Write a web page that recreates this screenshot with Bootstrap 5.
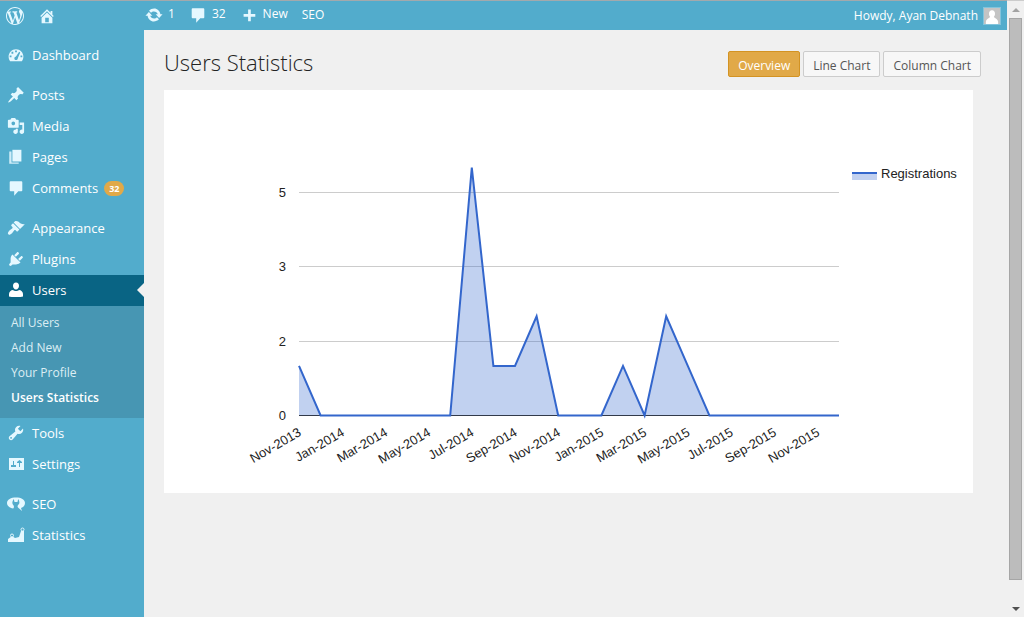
<!DOCTYPE html>
<html lang="en">
<head>
<meta charset="utf-8">
<meta name="viewport" content="width=device-width, initial-scale=1">
<title>Users Statistics</title>
<link href="https://cdn.jsdelivr.net/npm/bootstrap@5.3.0/dist/css/bootstrap.min.css" rel="stylesheet">
<style>
  body { font-family: "Open Sans", sans-serif; font-size: 13px; line-height: 18px; background: #f0f0f0; color: #444; }
  a { text-decoration: none; }
  .app-pane { min-width: 0; }
  .admin-bar { background: #52accc; border-top: 1px solid #a3a9ac; height: 30px; font-size: 12px; font-weight: 500; }
  .admin-bar a { color: #fff; }
  .ico { width: 18px; height: 18px; fill: #e5f8ff; flex: none; }
  .bar-brand { width: 145px; padding-left: 6px; gap: 14px; }
  .bar-links { gap: 14px; padding-bottom: 2px; }
  .bar-links a { gap: 5px; }
  .bar-links .ico { margin-top: 1px; }
  .bar-user { padding-right: 7px; gap: 6px; }
  .avatar { width: 16px; height: 16px; outline: 1px solid #82c4dc; }
  .side-menu { width: 144px; background: #52accc; padding-top: 10px; flex: none; }
  .side-menu a { color: #fff; }
  .menu-row { height: 31px; padding: 0 0 1px 7px; gap: 7px; position: relative; }
  .menu-gap { margin-top: 9px; }
  .menu-row.current { background: #096484; }
  .menu-row.current .ico { fill: #fff; }
  .menu-row.current::after { content: ""; position: absolute; right: 0; top: 8px; border: 7px solid transparent; border-right-color: #f0f0f0; border-left-width: 0; }
  .count { background: #e1a948; font-size: 9px; line-height: 15px; padding: 0 5px; font-weight: 700; margin-left: -1px; }
  .sub-menu { background: #4796b3; padding: 4px 11px 8px; }
  .sub-menu a { display: block; font-size: 12px; line-height: 25px; color: #dceef4; }
  .sub-menu a.current { color: #fff; font-weight: 600; }
  .page-main { padding: 21px 26px 20px 20px; }
  .page-title { font-size: 22px; line-height: 22px; font-weight: 300; color: #222; }
  .view-switch { gap: 3px; }
  .view-btn { font-size: 12px; line-height: 18px; padding: 5px 9px 1px; border: 1px solid #ccc; border-radius: 2px; background: #f7f7f7; color: #555; }
  .view-btn.active { background: #e1a948; border-color: #d39323; color: #fff; }
  .chart-card { background: #fff; margin: 13px 8px 0 0; }
  .chart-card text { font: 13px "Liberation Sans", sans-serif; fill: #222; }
  .scroll-rail { width: 17px; background: #f0f0f0; border-top: 1px solid #ccc; flex: none; height: 100vh; padding: 6px 2px 5px; position: sticky; top: 0; }
  .scroll-thumb { background: #bcbcbc; border: 1px solid #a6a6a6; width: 13px; margin: 6px 0 27px; }
</style>
</head>
<body>
<svg class="d-none" xmlns="http://www.w3.org/2000/svg">
  <symbol id="i-wp" viewBox="0 0 20 20"><path d="M20 10c0-5.51-4.49-10-10-10C4.48 0 0 4.49 0 10c0 5.52 4.48 10 10 10 5.51 0 10-4.48 10-10zM7.78 15.37L4.37 6.22c.55-.02 1.17-.08 1.17-.08.5-.06.44-1.13-.06-1.11 0 0-1.45.11-2.37.11-.18 0-.37 0-.58-.01C4.12 2.69 6.87 1.11 10 1.11c2.33 0 4.45.87 6.05 2.34-.68-.11-1.65.39-1.65 1.58 0 .74.45 1.36.9 2.1.35.61.55 1.36.55 2.46 0 1.49-1.4 5-1.4 5l-3.03-8.37c.54-.02.82-.17.82-.17.5-.05.44-1.25-.06-1.22 0 0-1.44.12-2.38.12-.87 0-2.33-.12-2.33-.12-.5-.03-.56 1.2-.06 1.22l.92.08 1.26 3.41zM17.41 10c.24-.64.74-1.87.43-4.25.7 1.29 1.05 2.71 1.05 4.25 0 3.29-1.73 6.24-4.4 7.78.97-2.59 1.94-5.2 2.92-7.78zM6.1 18.09C3.12 16.65 1.11 13.53 1.11 10c0-1.3.23-2.48.72-3.59C3.25 10.3 4.67 14.2 6.1 18.09zm4.03-6.63l2.58 6.98c-.86.29-1.76.45-2.71.45-.79 0-1.57-.11-2.29-.33.81-2.38 1.62-4.74 2.42-7.1z"/></symbol>
  <symbol id="i-home" viewBox="0 0 20 20"><path d="M16 8.5l1.53 1.53-1.06 1.06L10 4.6l-6.47 6.49-1.06-1.06L10 2.5l4 4v-2h2v4zm-6-2.46l6 5.99V18H4v-5.97zM12 17v-5H8v5h4z"/></symbol>
  <symbol id="i-update" viewBox="0 0 20 20"><path d="M10.2 2.9c3.53 0 6.43 2.8 6.92 6.38h2.38l-3.8 4-3.8-4h2.32c-.45-1.8-2.21-3.1-4.32-3.1-1.2 0-2.4.5-3.2 1.4L4.5 5.2C5.9 3.7 8.11 2.9 10.2 2.9zm-.4 14.200c-3.52 0-6.43-2.800-6.92-6.380H.5l3.800-4 3.800 4H5.780c.45 1.800 2.210 3.100 4.320 3.100 1.200 0 2.400-.5 3.200-1.400l2.200 2.380c-1.400 1.500-3.610 2.300-5.700 2.300z"/></symbol>
  <symbol id="i-comment" viewBox="0 0 20 20"><path d="M4 2.500h12q1 0 1 1v9q0 1-1 1h-3.500L8 18.500v-5H4q-1 0-1-1v-9q0-1 1-1z"/></symbol>
  <symbol id="i-plus" viewBox="0 0 20 20"><path d="M17 9v3h-5v5H9v-5H4V9h5V4h3v5z"/></symbol>
  <symbol id="i-dash" viewBox="0 0 20 20"><path fill-rule="evenodd" d="M3.500 17h13c1-1.400 1.700-3.100 1.700-5 0-4.400-3.600-8.300-8.200-8.300S1.800 7.600 1.800 12c0 1.900.7 3.600 1.700 5zM9 5h2v2H9zM5 6.500h2v2H5zM3 10.500h2v2H3zM15 10.500h2v2h-2zM13.500 6.500l1.200.8-2.700 6.200c.2 1.400-.8 2-2 2s-2-1-1.800-2c.1-1 1-1.400 1.600-1.500z"/></symbol>
  <symbol id="i-pin" viewBox="0 0 20 20"><path d="M10.440 3.020l1.820-1.820 6.360 6.350-1.830 1.820c-1.050-.68-2.480-.57-3.410.36l-.75.75c-.92.93-1.040 2.350-.35 3.410l-1.830 1.820-2.410-2.410-2.800 2.790c-.42.42-3.380 2.710-3.800 2.290s1.860-3.390 2.280-3.810l2.790-2.790L4.100 9.360l1.830-1.820c1.050.69 2.480.57 3.400-.36l.75-.75c.93-.92 1.050-2.350.36-3.410z"/></symbol>
  <symbol id="i-media" viewBox="0 0 20 20"><path d="M13 11V4c0-.55-.45-1-1-1h-1.670L9 1H5L3.670 3H2c-.55 0-1 .45-1 1v7c0 .55.45 1 1 1h10c.55 0 1-.45 1-1zM7 5.100c1.100 0 2 .9 2 2s-.9 2-2 2-2-.9-2-2 .9-2 2-2zM14 6h5v10.500c0 1.380-1.120 2.500-2.500 2.500S14 17.880 14 16.500s1.120-2.500 2.500-2.500c.17 0 .34.02.5.05V9h-3V6zm-4 8.050V13h2v3.500c0 1.380-1.120 2.500-2.500 2.500S7 17.880 7 16.500 8.120 14 9.500 14c.17 0 .34.02.5.05z"/></symbol>
  <symbol id="i-page" viewBox="0 0 20 20"><path d="M6 15V2h10v13H6z"/><path d="M5 16h8v1.500H2.500V4H5z" opacity=".85"/></symbol>
  <symbol id="i-brush" viewBox="0 0 20 20"><path d="M14.480 11.060L7.410 3.990l1.500-1.500c.5-.56 2.300-.47 3.510.32 1.210.8 1.430 1.280 2.910 2.100 1.180.64 2.450 1.260 4.450.85zm-.71.71L6.700 4.700 4.930 6.470c-.39.39-.39 1.020 0 1.410l1.060 1.060c.39.39.39 1.030 0 1.420-.6.6-1.430 1.110-2.210 1.690-.35.26-.7.53-1.010.84C1.430 14.230.4 16.080 1.400 17.070c.99 1 2.840-.03 4.180-1.360.31-.31.58-.66.85-1.020.57-.78 1.080-1.610 1.690-2.210.39-.39 1.020-.39 1.410 0l1.060 1.060c.39.39 1.020.39 1.410 0z"/></symbol>
  <symbol id="i-plug" viewBox="0 0 20 20"><path d="M13.110 4.360L9.870 7.600 8 5.730l3.240-3.240c.35-.34 1.050-.2 1.560.32.52.51.66 1.210.31 1.550zm-8 1.770l.91-1.120 9.010 9.010-1.190.84c-.71.71-2.630 1.160-3.820 1.160H6.140L4.900 17.260c-.59.59-1.540.59-2.120 0-.59-.58-.59-1.530 0-2.120l1.240-1.240v-3.880c0-1.130.4-3.190 1.090-3.890zm7.260 3.970l3.240-3.240c.34-.35 1.040-.21 1.550.31.52.51.66 1.210.31 1.550l-3.240 3.250z"/></symbol>
  <symbol id="i-user" viewBox="0 0 18 18"><path d="M9 1.500c2 0 3 1.400 3 3.300 0 2-1.200 3.700-3 3.700S6 6.800 6 4.800c0-1.900 1-3.300 3-3.300zM2 15.500V13c0-2 2-4 4-4 .8.800 1.800 1.100 3 1.100s2.200-.3 3-1.100c2 0 4 2 4 4v2.500c-2 .7-12 .7-14 0z"/></symbol>
  <symbol id="i-tool" viewBox="0 0 20 20"><path d="M16.680 9.770c-1.340 1.340-3.300 1.670-4.950.99l-5.410 6.520c-.99.99-2.590.99-3.580 0s-.99-2.590 0-3.570l6.520-5.420c-.68-1.650-.35-3.610.99-4.950 1.280-1.280 3.120-1.620 4.720-1.060l-2.890 2.890 2.820 2.820 2.860-2.870c.53 1.580.18 3.390-1.080 4.650zM3.810 16.210c.4.39 1.040.39 1.430 0 .4-.4.4-1.040 0-1.430-.39-.4-1.030-.4-1.430 0-.39.39-.39 1.030 0 1.430z"/></symbol>
  <symbol id="i-set" viewBox="0 0 18 18"><path fill-rule="evenodd" d="M2 3h15v12H2zM6 6h1v4h2v2H4v-2h2zM12 12V8h-2V7l2.500-2L15 7v1h-2v4z"/></symbol>
  <symbol id="i-seo" viewBox="0 0 18 18"><path fill-rule="evenodd" d="M9 2.500c5 0 9 2 9 5.500 0 2.700-1.700 4.300-4 5l1 3-4-3.500c-.8-1-.5-2 .5-3 1.200-1 1.300-3-.3-5.500l-.7 3H7.500l-.7-3C5 6.500 5 8.800 6.200 10c1 1 1 2.200 0 3.500C2.500 12.700 0 10.800 0 8c0-3.500 4-5.500 9-5.500z"/></symbol>
  <symbol id="i-stat" viewBox="0 0 18 18"><path d="M1 13l4-3 3 2 4-1 2-6h3v11H1z"/><circle cx="15.500" cy="3.500" r="1.500" fill="#52accc" stroke="#e5f8ff"/><circle cx="5" cy="9.500" r="1.500" fill="#52accc" stroke="#e5f8ff"/></symbol>
</svg>

<div class="d-flex">
  <div class="app-pane flex-grow-1 d-flex flex-column min-vh-100">
    <header class="admin-bar d-flex align-items-center">
      <div class="bar-brand d-flex align-items-center">
        <a class="d-flex" href="#" aria-label="WordPress"><svg class="ico"><use href="#i-wp"/></svg></a>
        <a class="d-flex" href="#" aria-label="Visit site"><svg class="ico"><use href="#i-home"/></svg></a>
      </div>
      <nav class="bar-links d-flex align-items-center">
        <a class="d-flex" href="#"><svg class="ico"><use href="#i-update"/></svg>1</a>
        <a class="d-flex" href="#"><svg class="ico"><use href="#i-comment"/></svg>32</a>
        <a class="d-flex" href="#"><svg class="ico"><use href="#i-plus"/></svg>New</a>
        <a href="#">SEO</a>
      </nav>
      <a class="bar-user d-flex align-items-center ms-auto" href="#">Howdy, Ayan Debnath
        <svg class="avatar" viewBox="0 0 17 17"><path fill="#c4c4c4" d="M0 0h17v17H0z"/><path fill="#fff" d="M8.500 2.500c2 0 3.200 1.500 3.200 3.500 0 1.500-.5 2.600-1.200 3.300 0 1.200 4 1.700 4.500 5.200V17H2v-2.500c.5-3.500 4.500-4 4.500-5.200C5.800 8.600 5.300 7.500 5.300 6c0-2 1.200-3.500 3.200-3.500z"/></svg>
      </a>
    </header>
    <div class="d-flex flex-grow-1">
      <nav class="side-menu">
        <a class="menu-row d-flex align-items-center" href="#"><svg class="ico"><use href="#i-dash"/></svg>Dashboard</a>
        <a class="menu-row menu-gap d-flex align-items-center" href="#"><svg class="ico"><use href="#i-pin"/></svg>Posts</a>
        <a class="menu-row d-flex align-items-center" href="#"><svg class="ico"><use href="#i-media"/></svg>Media</a>
        <a class="menu-row d-flex align-items-center" href="#"><svg class="ico"><use href="#i-page"/></svg>Pages</a>
        <a class="menu-row d-flex align-items-center" href="#"><svg class="ico"><use href="#i-comment"/></svg>Comments <span class="count rounded-pill">32</span></a>
        <a class="menu-row menu-gap d-flex align-items-center" href="#"><svg class="ico"><use href="#i-brush"/></svg>Appearance</a>
        <a class="menu-row d-flex align-items-center" href="#"><svg class="ico"><use href="#i-plug"/></svg>Plugins</a>
        <a class="menu-row current d-flex align-items-center" href="#"><svg class="ico"><use href="#i-user"/></svg>Users</a>
        <div class="sub-menu">
          <a href="#">All Users</a>
          <a href="#">Add New</a>
          <a href="#">Your Profile</a>
          <a class="current" href="#" aria-current="page">Users Statistics</a>
        </div>
        <a class="menu-row d-flex align-items-center" href="#"><svg class="ico"><use href="#i-tool"/></svg>Tools</a>
        <a class="menu-row d-flex align-items-center" href="#"><svg class="ico"><use href="#i-set"/></svg>Settings</a>
        <a class="menu-row menu-gap d-flex align-items-center" href="#"><svg class="ico"><use href="#i-seo"/></svg>SEO</a>
        <a class="menu-row d-flex align-items-center" href="#"><svg class="ico"><use href="#i-stat"/></svg>Statistics</a>
      </nav>
      <main class="page-main flex-grow-1">
        <div class="d-flex align-items-start justify-content-between">
          <h1 class="page-title mb-0">Users Statistics</h1>
          <div class="view-switch d-flex">
            <button type="button" class="btn view-btn active">Overview</button>
            <button type="button" class="btn view-btn">Line Chart</button>
            <button type="button" class="btn view-btn">Column Chart</button>
          </div>
        </div>
        <div class="chart-card">
          <svg class="d-block w-100" viewBox="0 0 809 403" role="img" aria-label="Registrations per month">
            <path stroke="#ccc" d="M135 102.500h540M135 176.500h540M135 251.500h540"/>
            <path stroke="#333" d="M135 325.500h540"/>
            <g id="series"></g>
            <g id="months" text-anchor="end"></g>
            <g text-anchor="end">
              <text x="122" y="107">5</text><text x="122" y="181">3</text><text x="122" y="256">2</text><text x="122" y="330">0</text>
            </g>
            <path fill="#c2d1f0" d="M688 83h25v7h-25z"/><path stroke="#36c" stroke-width="2" d="M688 83h25"/>
            <text x="717" y="88">Registrations</text>
          </svg>
        </div>
      </main>
    </div>
  </div>
  <div class="scroll-rail d-flex flex-column align-items-center" aria-hidden="true">
    <svg width="8" height="5"><path fill="#a3a3a3" d="M0 5l4-4 4 4z"/></svg>
    <div class="scroll-thumb flex-grow-1"></div>
    <svg width="8" height="5"><path fill="#505050" d="M0 0h8L4 4z"/></svg>
  </div>
</div>
<script src="https://cdn.jsdelivr.net/npm/bootstrap@5.3.0/dist/js/bootstrap.bundle.min.js"></script>
<script>
  // Monthly registrations, Nov-2013 to Dec-2015
  const counts = [1,0,0,0,0,0,0,0,5,1,1,2,0,0,0,1,0,2,1,0,0,0,0,0,0,0];
  const left = 135, base = 325.5, step = 540 / (counts.length - 1), unit = 49.6;
  const line = counts.map((n, i) => (left + i * step) + ',' + (base - n * unit)).join(' ');
  document.getElementById('series').innerHTML =
    `<polygon fill="#36c" fill-opacity=".3" points="${left},${base} ${line} 675,${base}"/>` +
    `<polyline fill="none" stroke="#36c" stroke-width="2" points="${line}"/>`;
  const names = ['Nov-2013','Jan-2014','Mar-2014','May-2014','Jul-2014','Sep-2014','Nov-2014','Jan-2015','Mar-2015','May-2015','Jul-2015','Sep-2015','Nov-2015'];
  document.getElementById('months').innerHTML = names.map((m, i) =>
    `<text transform="translate(${left + 2 * i * step + 3} 345) rotate(-30)">${m}</text>`).join('');
</script>
</body>
</html>
